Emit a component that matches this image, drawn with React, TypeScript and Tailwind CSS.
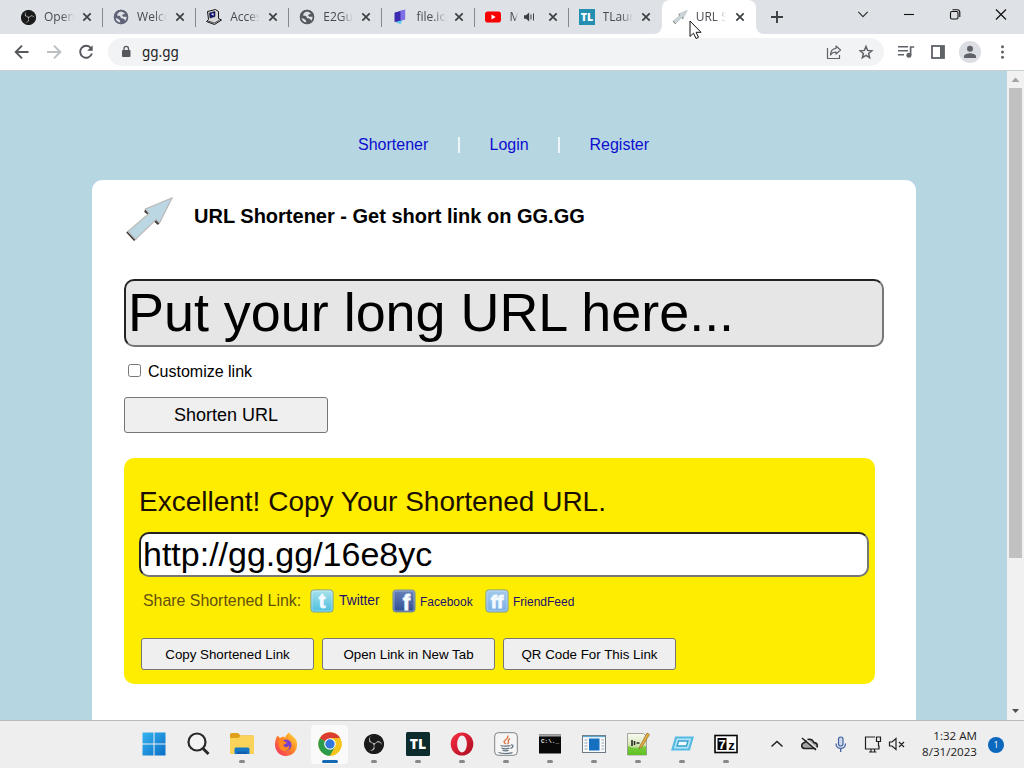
import type { ReactNode } from "react";
import { SiObsstudio } from "react-icons/si";

const UI = "font-['Open_Sans','Noto_Sans',sans-serif]";

function Globe({ color }: { color: string }) {
  return (
    <svg width="16" height="16" viewBox="0 0 16 16">
      <circle cx="8" cy="8" r="7.2" fill={color} />
      <path d="M7.500 2.500c2 0 3.500 1 4.500 2.500l-2 .3-1 1.500 1.500 1h3.300c.2 2-.5 3.500-1.500 4.500l-1-2.300-3.300-1-1-2-3-.5c.3-2 1.800-3.600 3.500-4Z" fill="#dee1e6" />
      <path d="M2.200 9l2.800.8 2 1.800.3 2.200C4.500 13.500 2.600 11.500 2.200 9Z" fill="#dee1e6" />
      <circle cx="8" cy="8" r="6.500" fill="none" stroke={color} strokeWidth="1.500" />
    </svg>
  );
}

function Obs({ size }: { size: number }) {
  return (
    <svg width={size} height={size} viewBox="0 0 24 24">
      <circle cx="12" cy="12" r="11.800" fill="#1b1a1b" />
      <SiObsstudio size={24} color="#c8c8c8" />
      <circle cx="12" cy="12" r="11.100" fill="none" stroke="#1b1a1b" strokeWidth="2" />
    </svg>
  );
}

function Computer() {
  return (
    <svg width="16" height="16" viewBox="0 0 16 16">
      <path d="M1.500 2.500 9.500.5l3 2v7l3 1.500-7 4.500-8-3 2-2Z" fill="#d9d9dc" stroke="#111" strokeWidth="1" />
      <path d="m3.500 4 5.500-1.500v5L4 9Z" fill="#151580" stroke="#111" strokeWidth=".6" />
      <path d="m5 5 2.500-.7v2.500Z" fill="#fff" />
      <path d="m2 12 6.500 2 5-3" stroke="#111" strokeWidth=".7" fill="none" />
    </svg>
  );
}

function FileIo() {
  return (
    <svg width="16" height="16" viewBox="0 0 16 16">
      <path d="M3 3.500 12.500.8v9.700L4 13.500Z" fill="#5b4dcf" />
      <path d="m8 2.100 5.200-1.700v10L8 11.500Z" fill="#7f70e6" />
      <path d="m2.500 3.800 6-1.600v9L2.500 13Z" fill="#3b2bb0" />
      <path d="m4 13 6-1.500-1.500 3.700Z" fill="#55cfe9" />
    </svg>
  );
}

function YouTube() {
  return (
    <svg width="16" height="16" viewBox="0 0 16 16" overflow="visible">
      <rect x="0" y="2.500" width="16" height="11" rx="2.800" fill="#f90000" />
      <path d="m6.500 5.600 4.200 2.400-4.200 2.400Z" fill="#fff" />
    </svg>
  );
}

function ArrowLogo({ size }: { size: number }) {
  const small = size < 20;
  return (
    <svg width={size} height={size} viewBox="0 0 50 50">
      <path d="M12.500 45 4.500 36.500 2.200 38.500 10 47ZM27 17 21 15.500 20.300 18 25 21.500ZM31.500 24.500 36 28 34 31 30 27.500Z" fill="#403a38" />
      <path d="M48 4 35.500 29 32 25.500 11.500 45.500 4 37.500 25 19.500 21.500 15Z" fill={small ? "#c9d3d8" : "#bbd7e3"} stroke={small ? "#a9abac" : "#bab9b6"} strokeWidth="1.200" />
    </svg>
  );
}

function TL({ size, dark }: { size: number; dark?: boolean }) {
  return (
    <svg width={size} height={size} viewBox="0 0 24 24">
      <rect width="24" height="24" rx={dark ? 1.5 : 0} fill={dark ? "#0b2b2d" : "#258fb1"} />
      <text x="12" y={dark ? 17 : 17.500} textAnchor="middle" fontFamily="Open Sans" fontWeight="800" fontSize={dark ? 14 : 16} fill="#fff">TL</text>
    </svg>
  );
}

function Close() {
  return (
    <svg width="14" height="14" viewBox="0 0 14 14" className="shrink-0">
      <path d="m3.300 3.300 7.400 7.400m0-7.400-7.400 7.400" stroke="#3c4043" strokeWidth="1.700" />
    </svg>
  );
}

const tabs: { title: string; icon: ReactNode; audio?: boolean }[] = [
  { title: "Open", icon: <Obs size={15} /> },
  { title: "Welco", icon: <Globe color="#5f6577" /> },
  { title: "Acces", icon: <Computer /> },
  { title: "E2Gu", icon: <Globe color="#56595e" /> },
  { title: "file.io", icon: <FileIo /> },
  { title: "M", icon: <YouTube />, audio: true },
  { title: "TLaun", icon: <TL size={16} /> },
  { title: "URL S", icon: <ArrowLogo size={16} /> },
];

function TabStrip() {
  return (
    <div className="flex h-[34px] shrink-0 bg-[#dee1e6] pl-[10px]">
      {tabs.map((t, i) => {
        const active = i === 7;
        return (
          <div key={t.title} className={"relative flex h-[34px] shrink-0 items-center pl-[10px] pr-[9px] " + (active ? "w-[94px] rounded-t-lg bg-white" : "w-[93.100px]")}>
            <span className="flex w-4 shrink-0 justify-center">{t.icon}</span>
            <span className={"ml-2 overflow-hidden whitespace-nowrap text-[12px] leading-4 text-[#484c51] [mask-image:linear-gradient(to_right,black_60%,transparent)] " + (t.audio ? "w-[9px]" : "w-[30px]")}>{t.title}</span>
            {t.audio && (
              <svg className="ml-[4px] mr-[3px] shrink-0" width="14" height="14" viewBox="0 0 14 14">
                <path d="M2 5.200h2L7.200 2.500v9L4 8.800H2Z" fill="#3c4043" />
                <path d="M9 4.500v5M11.500 3.500v7" stroke="#3c4043" strokeWidth="1" />
              </svg>
            )}
            <span className="ml-auto flex"><Close /></span>
            {i < 6 && <span className="absolute right-0 top-[8px] h-[19px] w-px bg-[#85888d]" />}
            {active && (
              <>
                <svg className="absolute bottom-0 -left-2" width="8" height="8"><path d="M8 0v8H0A8 8 0 0 0 8 0Z" fill="#fff" /></svg>
                <svg className="absolute bottom-0 -right-2" width="8" height="8"><path d="M0 0v8h8A8 8 0 0 1 0 0Z" fill="#fff" /></svg>
              </>
            )}
          </div>
        );
      })}
      <svg className="ml-[13px] mt-[9px]" width="16" height="16" viewBox="0 0 16 16"><path d="M8 2v12M2 8h12" stroke="#3c4043" strokeWidth="1.900" /></svg>
      <div className="ml-auto flex h-[29px] items-center text-black">
        <svg width="46" height="16" viewBox="0 0 46 16"><path d="m18.300 4.800 4.700 4.900 4.700-4.900" fill="none" stroke="#333" strokeWidth="1.200" /></svg>
        <svg width="46" height="16" viewBox="0 0 46 16"><path d="M18 7.500h10" stroke="#111" strokeWidth="1.100" /></svg>
        <svg width="46" height="16" viewBox="0 0 46 16"><rect x="18.500" y="4.500" width="7.500" height="7.500" rx="1.500" fill="none" stroke="#111" strokeWidth="1.100" /><path d="M20.500 2.700h4.800a2.500 2.500 0 0 1 2.500 2.500v4.800" fill="none" stroke="#111" strokeWidth="1.100" /></svg>
        <svg width="46" height="16" viewBox="0 0 46 16"><path d="m18 2.500 10 10m0-10-10 10" stroke="#111" strokeWidth="1.200" /></svg>
      </div>
    </div>
  );
}

function Toolbar() {
  return (
    <div className="flex h-9 shrink-0 items-center bg-white">
      <svg width="108" height="36" viewBox="0 0 108 36" fill="none" className="shrink-0">
        <path d="M28.500 18H16m6-6.300L15.700 18l6.300 6.300" stroke="#54575b" strokeWidth="1.900" />
        <path d="M47 18h13m-6-6.300 6.300 6.300-6.300 6.300" stroke="#bcbfc2" strokeWidth="1.900" />
        <path d="M91 14.200a6 6 0 1 0 .9 5.300" stroke="#54575b" strokeWidth="1.900" />
        <path d="M92.700 11.200v5.500h-5.500Z" fill="#54575b" />
      </svg>
      <div className="flex h-7 w-[776px] shrink-0 items-center rounded-full bg-[#f1f3f4] pl-[12px]">
        <svg width="12" height="14" viewBox="0 0 12 14"><rect x="2" y="5" width="8.500" height="7" rx="1" fill="#55585c" /><path d="M4 5.500V3.700a2.200 2.200 0 0 1 4.500 0v1.800" fill="none" stroke="#55585c" strokeWidth="1.300" /></svg>
        <span className="ml-[10px] font-['Noto_Sans',sans-serif] text-[13.500px] leading-5 text-[#202124]">gg.gg</span>
        <svg className="ml-auto" width="16" height="16" viewBox="0 0 16 16" fill="none" stroke="#5f6368" strokeWidth="1.200"><path d="M1.500 4v10.500h12V11M10 2l4.500 4L10 10V8c-2.500 0-4 .5-5.500 3C4.500 7 6.500 4.700 10 4.300Z" strokeLinejoin="round" /></svg>
        <svg className="ml-4 mr-[10px]" width="16" height="16" viewBox="0 0 16 16"><path d="m8 2.500 1.600 3.900 4.200.4-3.200 2.700 1 4.100L8 11.400l-3.600 2.200 1-4.100-3.200-2.700 4.200-.4Z" fill="none" stroke="#5f6368" strokeWidth="1.500" /></svg>
      </div>
      <svg width="140" height="36" viewBox="0 0 140 36" className="shrink-0">
        <path d="M14 12.800h10M14 16.800h10M14 20.800h6" stroke="#5f6368" strokeWidth="1.600" />
        <path d="M26.600 21V13h3.600" fill="none" stroke="#5f6368" strokeWidth="1.700" /><circle cx="24.900" cy="21.300" r="2.500" fill="#5f6368" />
        <rect x="48" y="12" width="12" height="12" fill="none" stroke="#5f6368" strokeWidth="1.800" /><path d="M56 12h4v12h-4Z" fill="#5f6368" />
        <circle cx="86" cy="18" r="11" fill="#dbdee2" /><circle cx="86" cy="14.800" r="3" fill="#5f6368" /><path d="M80 24v-1.700c0-2 4-3 6-3s6 1 6 3V24Z" fill="#5f6368" />
        <circle cx="118.500" cy="12.800" r="1.500" fill="#5f6368" /><circle cx="118.500" cy="18" r="1.500" fill="#5f6368" /><circle cx="118.500" cy="23.200" r="1.500" fill="#5f6368" />
      </svg>
    </div>
  );
}

function ShareIcon({ label, top, bottom, size }: { label: string; top: string; bottom: string; size: number }) {
  const id = "g" + label + size;
  return (
    <svg width="24" height="24" viewBox="0 0 24 24" className="shrink-0">
      <defs><linearGradient id={id} x1="0" y1="0" x2="0" y2="1"><stop offset="0" stopColor={top} /><stop offset="1" stopColor={bottom} /></linearGradient></defs>
      <rect x=".9" y=".9" width="22.200" height="22.200" rx="3" fill={"url(#" + id + ")"} stroke="#7b9b91" strokeWidth=".9" />
      <rect x="2" y="2" width="20" height="20" rx="2" fill="none" stroke="#fff" strokeOpacity=".35" />
      <text x={label === "f" ? 14.500 : 12} y={label === "f" ? 20.500 : 19} textAnchor="middle" fontFamily="Liberation Sans" fontWeight="700" fontSize={size} fill="#f3faff" stroke="#f3faff" strokeWidth=".8">{label}</text>
    </svg>
  );
}

const smallButton = "h-8 w-[173px] rounded-[3px] border border-[#767676] bg-[#efefef] pt-[2px] text-[13.333px] leading-none text-black";

function Page() {
  return (
    <div className="flex h-[649px] shrink-0 font-['Liberation_Sans',Arial,sans-serif]">
      <main className="flex w-[1007px] flex-col overflow-hidden bg-[#b6d6e2]">
        <nav className="mt-[64px] flex h-5 shrink-0 items-center pl-[358px] text-[16px] text-[#0d0dd0]">
          <a className="w-[70px]">Shortener</a>
          <span className="ml-[30px] h-4 w-[2px] bg-[#edf5f8]" />
          <a className="ml-[29.500px] w-[39px]">Login</a>
          <span className="ml-[29.500px] h-4 w-[2px] bg-[#edf5f8]" />
          <a className="ml-[29.500px]">Register</a>
        </nav>
        <section className="ml-[92px] mt-[25px] w-[824px] grow rounded-t-[10px] bg-white pl-8">
          <header className="flex h-[99px] items-start">
            <div className="mt-[14px]"><ArrowLogo size={50} /></div>
            <h1 className="ml-[20px] mt-[24px] whitespace-nowrap text-[20px] font-bold leading-6 text-black">URL Shortener - Get short link on GG.GG</h1>
          </header>
          <div className="flex h-[68px] w-[760px] items-center rounded-[10px] border-2 border-[#767676] border-l-[#222] border-t-[#222] bg-[#e6e6e6] pl-[2px] text-[53.900px] leading-none text-black">
            <span className="whitespace-nowrap">Put your long URL here...</span>
          </div>
          <label className="mt-[14px] flex h-5 items-center pl-1 text-[16px] text-black">
            <span className="relative -top-px h-[13px] w-[13px] rounded-[2.500px] border border-[#767676] bg-white" />
            <span className="ml-[7px] pt-[2px]">Customize link</span>
          </label>
          <button className="mt-[16px] block h-9 w-[204px] rounded-[3px] border border-[#767676] bg-[#efefef] text-[18px] leading-none text-black">Shorten URL</button>
          <div className="mt-[25px] h-[226px] w-[751px] rounded-[10px] bg-[#ffed00] pl-[15px] pt-[28px]">
            <h2 className="h-8 text-[28px] leading-8 text-[#1b0d00]">Excellent! Copy Your Shortened URL.</h2>
            <div className="mt-[14px] flex h-[45px] w-[730px] items-center rounded-[10px] border-2 border-[#767676] border-l-[#222] border-t-[#222] bg-white pb-[2px] pl-[2px] text-[34px] leading-none text-black">http://gg.gg/16e8yc</div>
            <div className="mt-[12px] flex h-6 items-center pl-[4px] text-[12px] text-[#22106e]">
              <span className="w-[167px] text-[15.900px] text-[#63500f]">Share Shortened Link:</span>
              <ShareIcon label="t" top="#a8e2ea" bottom="#4dbfe0" size={20} />
              <a className="ml-[5px] w-[53px] pt-px text-[13.800px]">Twitter</a>
              <ShareIcon label="f" top="#6c83b9" bottom="#2f4d94" size={22} />
              <a className="ml-[4px] w-[65px] pt-px">Facebook</a>
              <ShareIcon label="ff" top="#a3c9ea" bottom="#7cafe7" size={19} />
              <a className="ml-[4px] pt-px">FriendFeed</a>
            </div>
            <div className="mt-[25px] flex gap-2 pl-[2px]">
              <button className={smallButton}>Copy Shortened Link</button>
              <button className={smallButton}>Open Link in New Tab</button>
              <button className={smallButton}>QR Code For This Link</button>
            </div>
          </div>
        </section>
      </main>
      <aside className="flex w-[17px] flex-col items-center bg-[#f1f1f1]">
        <svg width="17" height="17" viewBox="0 0 17 17"><path d="m4.500 11 4-4.500 4 4.500Z" fill="#a3a3a3" /></svg>
        <div className="h-[470px] w-[13px] bg-[#c1c1c1]" />
        <svg className="mt-auto" width="17" height="17" viewBox="0 0 17 17"><path d="m5 6 3.500 4L12 6Z" fill="#505050" /></svg>
      </aside>
    </div>
  );
}

const apps: ReactNode[] = [
  <>
    <defs><linearGradient id="win" x1="0" y1="0" x2="1" y2="1"><stop offset="0" stopColor="#35b4f0" /><stop offset="1" stopColor="#0a6ec6" /></linearGradient></defs>
    <path d="M.5.500h11v11H.5ZM12.500.5h11v11h-11ZM.5 12.500h11v11H.5ZM12.500 12.500h11v11h-11Z" fill="url(#win)" />
  </>,
  <>
    <circle cx="11" cy="10" r="8.500" fill="#f3f3f3" stroke="#292929" strokeWidth="2.200" />
    <path d="m17 16.500 5.500 5.500" stroke="#292929" strokeWidth="3" />
  </>,
  <>
    <path d="M0 2.500Q0 1 1.500 1H8l2.500 2.500H23Q24 3.500 24 5v16q0 1-1 1H1q-1 0-1-1Z" fill="#e0a01c" />
    <path d="M0 6h8.500L11 3.500h12q1 0 1 1V21q0 1-1 1H1q-1 0-1-1Z" fill="#fbd35b" />
    <path d="M4.500 22v-5q0-1.500 1.500-1.500h12q1.500 0 1.500 1.500v5Z" fill="#1779c5" /><path d="M7 22v-2.500h10V22Z" fill="#0f5fae" />
  </>,
  <>
    <defs><linearGradient id="fox" x1="1" y1="0" x2="0" y2="1"><stop offset="0" stopColor="#ffe23f" /><stop offset=".45" stopColor="#ff8a24" /><stop offset="1" stopColor="#f1256a" /></linearGradient></defs>
    <path d="M3.500 3.500 6 6l3-1.500 2 1c1-2 2-4 4.500-5 .5 2 2 2.500 3.500 4 3 2 4.500 5 4 9A11 11 0 0 1 1 12.500C1 9 2 6 3.500 3.500Z" fill="url(#fox)" />
    <circle cx="12" cy="13" r="5.500" fill="#7b3fc9" /><path d="M5 8c2-1 4 0 5.500 1.500 2 .3 3 1 1 2.500-2 0-2.500 1-1.500 2.500 2 1.500 4 .5 5-1 1 4-3 6.500-6.500 5C5 17 4 12 5 8Z" fill="#ff8a1f" />
  </>,
  <>
    <circle cx="12" cy="12" r="11.700" fill="#f6c51d" />
    <path d="M12 12 1.870 6.150A11.700 11.700 0 0 1 22.130 6.150H12Z" fill="#dc3d31" />
    <path d="M1.870 6.150A11.700 11.700 0 0 0 12 23.700L17.060 14.920 12 12Z" fill="#2a9c4c" />
    <path d="M12 23.700A11.700 11.700 0 0 0 22.130 6.150H12L17.060 14.920Z" fill="#f6c51d" />
    <circle cx="12" cy="12" r="5.800" fill="#fff" /><circle cx="12" cy="12" r="4.700" fill="#3477dc" />
  </>,
  <g transform="translate(2 2)"><Obs size={20} /></g>,
  <TL size={24} dark />,
  <>
    <defs><linearGradient id="opera" x1="0" y1="0" x2="1" y2="1"><stop offset="0" stopColor="#fb2e43" /><stop offset="1" stopColor="#a90b20" /></linearGradient></defs>
    <ellipse cx="12" cy="12" rx="11.300" ry="11.600" fill="url(#opera)" /><ellipse cx="12" cy="12" rx="4.900" ry="8.500" fill="#efeff1" />
  </>,
  <>
    <rect x=".7" y=".7" width="22.600" height="22.600" rx="3.500" fill="#f5f5f5" stroke="#7f8286" strokeWidth="1" />
    <path d="M12 12c-6-4 4-4 1.500-8.500M13.500 12c3-2-1.500-3 2.500-5.500" fill="none" stroke="#de7542" strokeWidth="1.400" />
    <path d="M6.500 13.500c2 .8 8 .8 10 0M7.500 16c2 .8 6 .8 8 0M8.500 18.300c2 .6 4.500.6 6 0M4.500 20.500c4 1.300 11 1.300 14 0M17 13c3-.5 2.500 2.500-.5 3.500" fill="none" stroke="#5f7180" strokeWidth="1.200" />
  </>,
  <>
    <rect x="1" y="2.500" width="22" height="19" fill="#080808" /><rect x="1" y="2.500" width="22" height="2" fill="#a5a9ac" />
    <text x="3" y="10.500" fontFamily="Liberation Mono" fontWeight="700" fontSize="6" fill="#eee">C:\._</text>
  </>,
  <>
    <rect x=".5" y="3.500" width="23" height="17" fill="#f7f9fb" stroke="#707983" strokeWidth="1" /><path d="M1 4.500h22" stroke="#62a7d1" strokeWidth="1.300" />
    <path d="M7 6.500h10.500v12H7Z" fill="#1570c1" /><path d="M2.500 8h3m-3 3h3m-3 3h3m-3 3h3M19.500 8h2.500m-2.500 3H22m-2.500 3H22m-2.500 3H22" stroke="#93a2ad" />
  </>,
  <>
    <defs><linearGradient id="note" x1="0" y1="0" x2="0" y2="1"><stop offset="0" stopColor="#fafaf4" /><stop offset=".5" stopColor="#dae8bb" /><stop offset="1" stopColor="#58b51d" /></linearGradient></defs>
    <path d="M1.500 1.500h16l3 3v18.500h-19Z" fill="url(#note)" stroke="#8e928b" strokeWidth=".8" />
    <path d="M2 14q6 4 18 0v9H2Z" fill="#61c620" opacity=".75" />
    <path d="M6 8v6M8.500 9v4M10.500 11h3" stroke="#272b25" strokeWidth="1.600" />
    <path d="m14 14 7-13 2.500 1.500L16 15l-3 2Z" fill="#e7ac3b" stroke="#8a6b34" strokeWidth=".7" />
  </>,
  <>
    <path d="M6 5.500H22.500L19 17.500H2.500Z" fill="#b5e5f8" stroke="#55bbe3" strokeWidth="2.200" />
    <path d="M8.500 9h9.500L16.500 14H7Z" fill="#effbff" stroke="#349fd1" strokeWidth="1.400" />
  </>,
  <>
    <rect x="1" y="3.500" width="22" height="17" fill="#fff" stroke="#050505" strokeWidth="1.600" /><rect x="3.500" y="6" width="9" height="12" fill="#050505" />
    <text x="8" y="16.500" textAnchor="middle" fontFamily="Liberation Sans" fontWeight="700" fontSize="13" fill="#fff">7</text>
    <text x="17.500" y="18" textAnchor="middle" fontFamily="Liberation Sans" fontWeight="700" fontSize="13" fill="#050505">z</text>
  </>,
];

function Taskbar() {
  return (
    <footer className="flex h-12 shrink-0 items-center border-t border-[#b9bbbd] bg-[#eeeeee] pl-[131.500px]">
      {apps.map((icon, i) => (
        <div key={i} className="flex h-[47px] w-[44px] shrink-0 items-center justify-center">
          <div className={"relative flex h-[39px] w-[37px] items-center justify-center rounded " + (i === 4 ? "bg-[#fafafa]" : "")}>
            <svg width="24" height="24" viewBox="0 0 24 24" className="relative -top-px">{icon}</svg>
            {i > 1 && i !== 3 && <span className={"absolute bottom-px h-[3px] rounded-full " + (i === 4 ? "w-4 bg-[#1468b4]" : "w-[6px] bg-[#87888a]")} />}
          </div>
        </div>
      ))}
      <svg className="ml-[18.500px] shrink-0" width="142" height="47" viewBox="766 721 142 47" fill="none" stroke="#202020" strokeWidth="1.200">
        <path d="m771.500 746.500 5.500-5 5.500 5" strokeWidth="1.500" />
        <path d="M804.500 748.500c-4-.5-3.500-5.500.3-6 1.200-4.500 7.700-4.500 9 0 4.500.2 4.700 5.700.7 6Z" fill="#a2a4a6" strokeWidth="1.500" /><path d="m802 738 14 12" strokeWidth="1.500" /><path d="m803.500 737 14 12" stroke="#eeeeee" />
        <rect x="838.500" y="737" width="4.500" height="9" rx="2.200" stroke="#4263a5" fill="#ced8eb" /><path d="M836 743.500c0 6.500 9.500 6.500 9.500 0M840.700 748.500v3.500" stroke="#4263a5" strokeWidth="1.300" />
        <path d="M875 737h-9.500v12h13.500v-3.500M869 752h7.500M871 749.500v2.500M874.500 749.500v2.500M876.500 737h4v4.500h-4ZM878.500 741.500v5" />
        <path d="M889.500 742h2.500l4-3.500v11l-4-3.500h-2.500ZM899 742l5 5m0-5-5 5" />
      </svg>
      <div className="flex w-[69px] shrink-0 flex-col items-end pb-[2px] text-[11.600px] leading-4 text-[#202020]">
        <span>1:32 AM</span>
        <span className="whitespace-nowrap">8/31/2023</span>
      </div>
      <span className="ml-[11px] flex h-4 w-4 shrink-0 items-center justify-center rounded-full bg-[#0b68bd] text-[9px] leading-none text-white">1</span>
    </footer>
  );
}

export default function App() {
  return (
    <div className={"relative flex h-[768px] w-[1024px] flex-col overflow-hidden " + UI}>
      <TabStrip />
      <Toolbar />
      <div className="h-px shrink-0 bg-[#c9d0d3]" />
      <Page />
      <Taskbar />
      <svg className="absolute left-[689px] top-[20px]" width="13" height="20" viewBox="0 0 13 20">
        <path d="M1 1v15.500l3.500-3.300L7 18.500l2.500-1.200-2.400-5H12Z" fill="#fff" stroke="#111" strokeWidth="1" />
      </svg>
    </div>
  );
}
